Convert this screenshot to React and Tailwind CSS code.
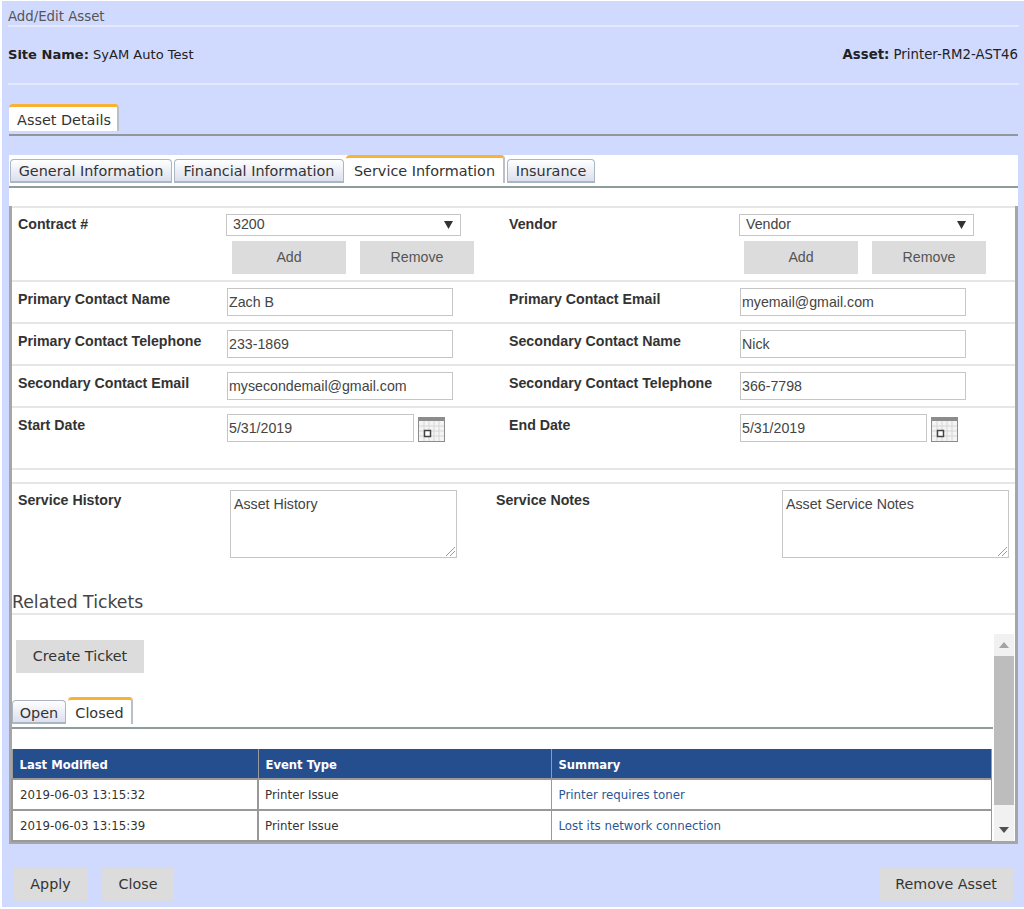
import React from 'react';

function CalendarIcon() {
  return (
    <svg width="27" height="25" viewBox="0 0 27 25" className="ml-[4px] mt-[3px] shrink-0">
      <rect x="0.5" y="0.5" width="26" height="24" fill="#f4f4f4" stroke="#8c8c8c" />
      <rect x="0" y="0" width="27" height="4" fill="#8c8c8c" />
      <path d="M6 4v20M11 4v20M16 4v20M21 4v20M1 9h25M1 14h25M1 19h25" stroke="#d6d6d6" strokeWidth="1" fill="none" />
      <rect x="6.5" y="13.5" width="6" height="6" fill="#fff" stroke="#444" strokeWidth="1.5" />
    </svg>
  );
}

function GrayButton({ children }) {
  return (
    <div className="flex h-[33px] w-[114px] items-center justify-center bg-[#dcdcdc] text-[14.2px] text-[#555] font-['Liberation_Sans',sans-serif]">
      {children}
    </div>
  );
}

function PlainButton({ children, className }) {
  return (
    <div className={`flex h-[33px] items-center justify-center bg-[#dcdcdc] text-[14.3px] text-[#333] font-['DejaVu_Sans',sans-serif] ${className || ''}`}>
      {children}
    </div>
  );
}

function Field({ value, width }) {
  return (
    <div className={`flex h-[28px] items-center border border-[#c6c6c6] bg-white pl-[1px] pt-[2px] text-[14.2px] text-[#444] font-['Liberation_Sans',sans-serif] ${width}`}>
      {value}
    </div>
  );
}

function Label({ children, width }) {
  return (
    <div className={`shrink-0 pl-[6px] text-[14.2px] font-bold leading-[16px] text-[#333] font-['Liberation_Sans',sans-serif] ${width}`}>
      {children}
    </div>
  );
}

function SelectBlock({ value, offset }) {
  return (
    <div className="-ml-px">
      <div className="flex h-[22px] w-[235px] items-center justify-between border border-[#c6c6c6] bg-white pl-[6px] pr-[7px] text-[14.2px] text-[#444] font-['Liberation_Sans',sans-serif]">
        <span>{value}</span>
        <svg width="9" height="8" viewBox="0 0 9 8"><path d="M0 0h9L4.5 8z" fill="#333" /></svg>
      </div>
      <div className={`mt-[5px] flex gap-[14px] ${offset}`}>
        <GrayButton>Add</GrayButton>
        <GrayButton>Remove</GrayButton>
      </div>
    </div>
  );
}

function FormRow({ left, right, height }) {
  return (
    <div className={`grid grid-cols-[491px_1fr] border-t-2 border-[#e6e6e6] pt-[6px] ${height}`}>
      <div className="flex">{left}</div>
      <div className="flex">{right}</div>
    </div>
  );
}

function TextRow({ l1, v1, l2, v2 }) {
  return (
    <FormRow
      height="h-[42px]"
      left={<><Label width="w-[215px] pt-[3px]">{l1}</Label><Field value={v1} width="w-[226px]" /></>}
      right={<><Label width="w-[237px] pt-[3px]">{l2}</Label><Field value={v2} width="w-[226px]" /></>}
    />
  );
}

function NoteBox({ value }) {
  return (
    <div className="relative h-[68px] w-[227px] border border-[#c6c6c6] bg-white px-[3px] py-[5px] text-[14.2px] leading-[16px] text-[#444] font-['Liberation_Sans',sans-serif]">
      {value}
      <svg width="10" height="10" viewBox="0 0 10 10" className="absolute bottom-px right-px">
        <path d="M1 10L10 1M5 10l5-5" stroke="#9a9a9a" strokeWidth="1" fill="none" />
      </svg>
    </div>
  );
}

function Tab({ children, active, className }) {
  if (active) {
    return (
      <div className={`flex items-center justify-center rounded-t-[4px] border-t-[3px] border-r-2 border-[#f9b234] border-r-[#b9c0c8] bg-white text-[14.4px] text-[#333] font-['DejaVu_Sans',sans-serif] ${className || ''}`}>
        {children}
      </div>
    );
  }
  return (
    <div className={`flex items-center justify-center rounded-t-[4px] border border-b-2 border-[#aab6c2] bg-gradient-to-b from-white to-[#dcdfee] text-[14.4px] text-[#333] font-['DejaVu_Sans',sans-serif] ${className || ''}`}>
      {children}
    </div>
  );
}

const tickets = [
  { time: '2019-06-03 13:15:32', type: 'Printer Issue', summary: 'Printer requires toner' },
  { time: '2019-06-03 13:15:39', type: 'Printer Issue', summary: 'Lost its network connection' },
];

export default function App() {
  return (
    <div className="h-[909px] w-[1024px] overflow-hidden bg-white pl-0.5 pt-px">
      <div className="h-[906px] bg-[#d0daff] pl-[6px] pr-[5px]">
        {/* page title */}
        <div className="flex h-[26px] items-center border-b-2 border-[#e4e9fd] pt-[7px] text-[13.3px] text-[#555] font-['DejaVu_Sans',sans-serif]">
          Add/Edit Asset
        </div>
        {/* site and asset */}
        <div className="flex h-[58px] items-center justify-between border-b-2 border-[#e4e9fd] text-[#222] font-['DejaVu_Sans',sans-serif]">
          <div className="text-[13.05px]"><span className="font-bold">Site Name:</span> SyAM Auto Test</div>
          <div className="pr-px text-[13.3px]"><span className="font-bold">Asset:</span> Printer-RM2-AST46</div>
        </div>

        <div className="ml-px mr-px mt-[19px] h-[32px] border-b-2 border-[#8f979c]">
          <Tab active className="h-[27px] w-[110px] pl-[2px] pt-[4px]">Asset Details</Tab>
        </div>

        {/* main panel */}
        <div className="ml-px mr-px mt-[19px] flex h-[689px] flex-col bg-white">
          <div className="flex h-[33px] items-end gap-[2px] border-b-2 border-[#8f9c9c] pb-[3px] pl-px">
            <Tab className="h-[24px] w-[162px] pt-[2px]">General Information</Tab>
            <Tab className="h-[24px] w-[170px] pt-[2px]">Financial Information</Tab>
            <Tab active className="h-[28px] w-[159px] pt-[2px]">Service Information</Tab>
            <Tab className="h-[24px] w-[88px] pt-[2px]">Insurance</Tab>
          </div>
          <div className="h-[18px]" />

          <div className="flex-1 border-x-[3px] border-b-[3px] border-[#a6a6a6]">
            <FormRow
              height="h-[74px]"
              left={<><Label width="w-[215px] pt-[2px]">Contract #</Label><SelectBlock value="3200" offset="ml-[6px]" /></>}
              right={<><Label width="w-[237px] pt-[2px]">Vendor</Label><SelectBlock value="Vendor" offset="ml-[5px]" /></>}
            />
            <TextRow l1="Primary Contact Name" v1="Zach B" l2="Primary Contact Email" v2="myemail@gmail.com" />
            <TextRow l1="Primary Contact Telephone" v1="233-1869" l2="Secondary Contact Name" v2="Nick" />
            <TextRow l1="Secondary Contact Email" v1="mysecondemail@gmail.com" l2="Secondary Contact Telephone" v2="366-7798" />
            <FormRow
              height="h-[62px]"
              left={<><Label width="w-[215px] pt-[3px]">Start Date</Label><Field value="5/31/2019" width="w-[187px]" /><CalendarIcon /></>}
              right={<><Label width="w-[237px] pt-[3px]">End Date</Label><Field value="5/31/2019" width="w-[187px]" /><CalendarIcon /></>}
            />
            <div className="h-[14px] border-t-2 border-[#e6e6e6]" />

            {/* service notes */}
            <div className="flex h-[107px] border-t-2 border-[#e6e6e6] pt-[6px]">
              <Label width="w-[218px] pt-[2px]">Service History</Label>
              <NoteBox value="Asset History" />
              <Label width="w-[325px] ml-[33px] pt-[2px]">Service Notes</Label>
              <div className="-ml-[33px]"><NoteBox value="Asset Service Notes" /></div>
            </div>

            <div className="h-[26px] border-b-2 border-[#e6e6e6] pt-[2px] text-[17.3px] leading-[22px] text-[#444] font-['DejaVu_Sans',sans-serif]">
              Related Tickets
            </div>

            {/* scroll area */}
            <div className="mt-[19px] flex h-[207px]">
              <div className="w-[981px]">
                <PlainButton className="ml-1 mt-[6px] w-[128px]">Create Ticket</PlainButton>
                <div className="mt-[24px] flex h-[32px] items-end gap-[2px] border-b-2 border-[#8f9c9c] pb-[3px]">
                  <Tab className="h-[24px] w-[54px] pt-[4px]">Open</Tab>
                  <Tab active className="h-[27px] w-[65px] pt-[3px]">Closed</Tab>
                </div>
                <table className="-ml-px mt-[20px] w-[981px] table-fixed border-collapse text-[11.8px] font-['DejaVu_Sans',sans-serif]">
                  <thead>
                    <tr className="h-[30px] bg-[#254e8f] text-left text-[11.6px] font-bold text-white">
                      <th className="w-[246px] border-x border-[#999] pl-[7px] pt-[4px]">Last Modified</th>
                      <th className="w-[293px] border-x border-[#999] pl-[7px] pt-[4px]">Event Type</th>
                      <th className="border-x border-[#999] pl-[7px] pt-[4px]">Summary</th>
                    </tr>
                  </thead>
                  <tbody>
                    {tickets.map((t) => (
                      <tr key={t.time} className="h-[31px] text-[#333]">
                        <td className="border-2 border-[#999] pl-[7px] pt-[3px]">{t.time}</td>
                        <td className="border-2 border-x border-[#999] pl-[6px] pt-[3px]">{t.type}</td>
                        <td className="border-2 border-x border-[#999] pl-[7px] pt-[3px] text-[#2a5699]">{t.summary}</td>
                      </tr>
                    ))}
                  </tbody>
                </table>
              </div>
              {/* scrollbar */}
              <div className="ml-px flex w-[20px] flex-col items-center bg-[#f1f1f1]">
                <div className="flex h-[22px] items-center justify-center">
                  <svg width="10" height="6" viewBox="0 0 10 6"><path d="M0 6h10L5 0z" fill="#a3a3a3" /></svg>
                </div>
                <div className="h-[149px] w-full bg-[#bdbdbd]" />
                <div className="flex flex-1 items-end justify-center pb-[8px]">
                  <svg width="10" height="6" viewBox="0 0 10 6"><path d="M0 0h10L5 6z" fill="#505050" /></svg>
                </div>
              </div>
            </div>
          </div>
        </div>

        {/* footer buttons */}
        <div className="mt-[24px] flex justify-between pl-[6px] pr-[6px]">
          <div className="flex gap-[15px]">
            <PlainButton className="w-[73px]">Apply</PlainButton>
            <PlainButton className="w-[72px]">Close</PlainButton>
          </div>
          <PlainButton className="w-[134px]">Remove Asset</PlainButton>
        </div>
      </div>
    </div>
  );
}
